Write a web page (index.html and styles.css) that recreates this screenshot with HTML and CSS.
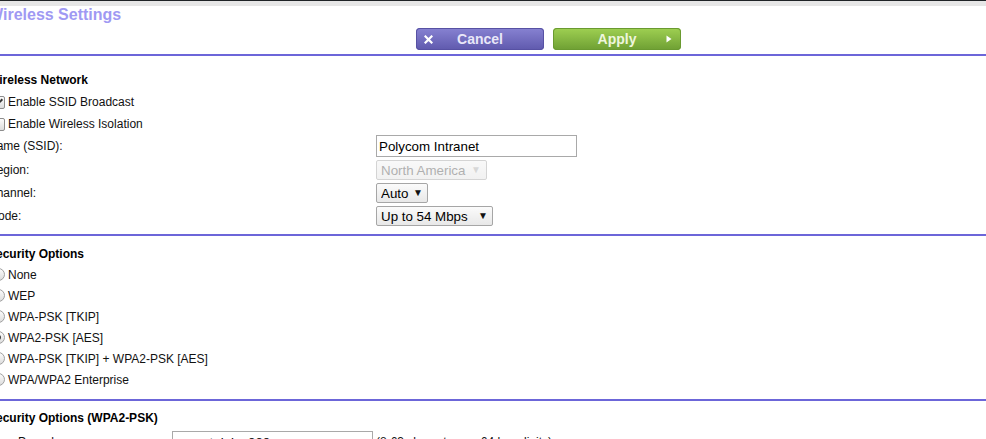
FILE: index.html
```html
<!DOCTYPE html>
<html lang="en">
<head>
<meta charset="utf-8">
<title>Wireless Settings</title>
<link rel="stylesheet" href="styles.css">
</head>
<body>
<div class="topbar"></div>
<div class="page">
  <h1 class="title">Wireless Settings</h1>
  <div class="actions">
    <button class="btn btn-cancel" type="button">
      <svg class="ico" width="9" height="9" viewBox="0 0 9 9"><path d="M1.5 1.5 L7.5 7.5 M7.5 1.5 L1.5 7.5" stroke="#fff" stroke-width="2.2" stroke-linecap="square"/></svg>
      <span class="btn-text">Cancel</span>
      <span></span>
    </button>
    <button class="btn btn-apply" type="button">
      <span></span>
      <span class="btn-text">Apply</span>
      <svg class="ico" width="6" height="8" viewBox="0 0 6 8"><path d="M0.5 0.5 L5.5 4 L0.5 7.5 Z" fill="#fff"/></svg>
    </button>
  </div>
  <hr class="rule">

  <section class="sec sec-network">
    <div class="heading">Wireless Network</div>
    <label class="opt"><input class="cb" type="checkbox" checked><span>Enable SSID Broadcast</span></label>
    <label class="opt"><input class="cb" type="checkbox"><span>Enable Wireless Isolation</span></label>
    <div class="form">
      <div class="lbl">Name (SSID):</div>
      <div><input class="text text-ssid" type="text" value="Polycom Intranet"></div>
      <div class="lbl">Region:</div>
      <div class="sel sel-region disabled">
        <select disabled><option>North America</option></select>
        <span class="arrow">&#9660;</span>
      </div>
      <div class="lbl">Channel:</div>
      <div class="sel sel-channel">
        <select><option>Auto</option></select>
        <span class="arrow">&#9660;</span>
      </div>
      <div class="lbl">Mode:</div>
      <div class="sel sel-mode">
        <select><option>Up to 54 Mbps</option></select>
        <span class="arrow">&#9660;</span>
      </div>
    </div>
  </section>
  <hr class="rule rule-mid">

  <section class="sec sec-security">
    <div class="heading heading-sm">Security Options</div>
    <label class="opt radio"><input class="rd" type="radio" name="sec"><span>None</span></label>
    <label class="opt radio"><input class="rd" type="radio" name="sec"><span>WEP</span></label>
    <label class="opt radio"><input class="rd" type="radio" name="sec"><span>WPA-PSK [TKIP]</span></label>
    <label class="opt radio"><input class="rd" type="radio" name="sec" checked><span>WPA2-PSK [AES]</span></label>
    <label class="opt radio"><input class="rd" type="radio" name="sec"><span>WPA-PSK [TKIP] + WPA2-PSK [AES]</span></label>
    <label class="opt radio"><input class="rd" type="radio" name="sec"><span>WPA/WPA2 Enterprise</span></label>
  </section>
  <hr class="rule rule-low">

  <section class="sec sec-psk">
    <div class="heading heading-sm">Security Options (WPA2-PSK)</div>
    <div class="psk-row">
      <div class="psk-lbl">Passphrase:</div>
      <input class="text text-psk" type="text" value="amtainlas888">
      <div class="hint">(8-63 characters or 64 hex digits)</div>
    </div>
  </section>
</div>
</body>
</html>
```

FILE: styles.css
```css
html, body {
  margin: 0;
  padding: 0;
  background: #fff;
}
body {
  font-family: "Liberation Sans", Arial, sans-serif;
  color: #111;
  overflow: hidden;
}
.topbar {
  height: 1px;
  background: #1f2326;
  border-bottom: 5px solid #e6e6e6;
}
.page {
  margin-left: -12px;
}
.title {
  margin: 1px 0 0;
  font-size: 16px;
  line-height: 16px;
  font-weight: bold;
  color: #9f99f3;
}
.actions {
  display: flex;
  gap: 9px;
  padding-left: 428px;
  margin-top: 5px;
}
.btn {
  width: 128px;
  height: 22px;
  padding: 0;
  border: 0;
  border-radius: 4px;
  display: grid;
  grid-template-columns: 24px 1fr 24px;
  align-items: center;
  justify-items: center;
  font-family: "Liberation Sans", Arial, sans-serif;
  font-weight: bold;
  font-size: 14px;
  line-height: 22px;
  cursor: pointer;
}
.btn-cancel {
  background: linear-gradient(#8782d2, #5f59ad);
  color: #e9e7f8;
  box-shadow: inset 0 0 0 1px #5751a3;
}
.btn-apply {
  background: linear-gradient(#9fd052, #6e9f33);
  color: #eef6dd;
  box-shadow: inset 0 0 0 1px #6a9a30;
}
.ico {
  display: block;
}
.rule {
  margin: 4px 0 0;
  height: 2px;
  border: 0;
  background: #6c66d9;
}
.rule-mid {
  margin-top: 8px;
}
.rule-low {
  margin-top: 9px;
}
.sec {
  font-size: 12px;
}
.sec-network {
  padding-top: 13px;
}
.sec-security {
  padding-top: 8px;
}
.sec-psk {
  padding-top: 7px;
}
.heading {
  font-weight: bold;
  color: #000;
  height: 22px;
  line-height: 22px;
}
.heading-sm {
  height: 20px;
  line-height: 20px;
}
.opt {
  display: flex;
  align-items: center;
  height: 22px;
  color: #111;
}
.opt.radio {
  height: 21px;
}
.cb, .rd {
  appearance: none;
  -webkit-appearance: none;
  box-sizing: border-box;
  width: 13px;
  height: 13px;
  margin: 0 3px 0 4px;
  border: 1px solid #8d8d8d;
  background: linear-gradient(#fcfcfc, #dcdcdc);
  display: grid;
  place-items: center;
}
.cb {
  border-radius: 2px;
}
.cb:checked::after {
  content: "";
  width: 3px;
  height: 6px;
  border: solid #333;
  border-width: 0 2px 2px 0;
  transform: translateY(-1px) rotate(45deg);
}
.rd {
  border-radius: 50%;
  margin-left: 4px;
  border-color: #a0a0a0;
}
.rd:checked::after {
  content: "";
  width: 5px;
  height: 5px;
  border-radius: 50%;
  background: #444;
}
.form {
  display: grid;
  grid-template-columns: 388px auto;
  row-gap: 3px;
  align-items: center;
  justify-items: start;
}
.lbl {
  font-size: 12px;
  color: #111;
}
.text {
  box-sizing: border-box;
  height: 22px;
  border: 1px solid #a9a9a9;
  padding: 0 2px;
  font-family: "Liberation Sans", Arial, sans-serif;
  font-size: 13.33px;
  color: #000;
  background: #fff;
  display: block;
}
.text-ssid {
  width: 201px;
}
.sel {
  display: inline-grid;
  align-items: center;
  height: 20px;
}
.sel > * {
  grid-area: 1 / 1;
}
.sel select {
  appearance: none;
  -webkit-appearance: none;
  box-sizing: border-box;
  height: 20px;
  margin: 0;
  padding: 0 0 0 4px;
  border: 1px solid #a6a6a6;
  border-radius: 2px;
  background: linear-gradient(#fbfbfb, #e8e8e8);
  font-family: "Liberation Sans", Arial, sans-serif;
  font-size: 13.33px;
  color: #000;
}
.sel .arrow {
  justify-self: end;
  font-size: 10px;
  line-height: 10px;
  color: #111;
  pointer-events: none;
}
.sel-region select { width: 111px; }
.sel-region .arrow { margin-right: 6px; }
.sel-channel select { width: 52px; }
.sel-channel .arrow { margin-right: 5px; }
.sel-mode select { width: 117px; }
.sel-mode .arrow { margin-right: 5px; }
.sel.disabled select {
  color: #8f8f8f;
  border-color: #c2c2c2;
  background: linear-gradient(#f7f7f7, #ececec);
}
.sel.disabled .arrow {
  color: #9a9a9a;
}
.psk-row {
  display: flex;
  align-items: center;
  margin-top: 3px;
}
.psk-lbl {
  width: 154px;
  padding-left: 30px;
  font-size: 12px;
}
.text-psk {
  width: 201px;
  padding-left: 18px;
}
.hint {
  margin-left: 3px;
  font-size: 12px;
  color: #111;
}
```
